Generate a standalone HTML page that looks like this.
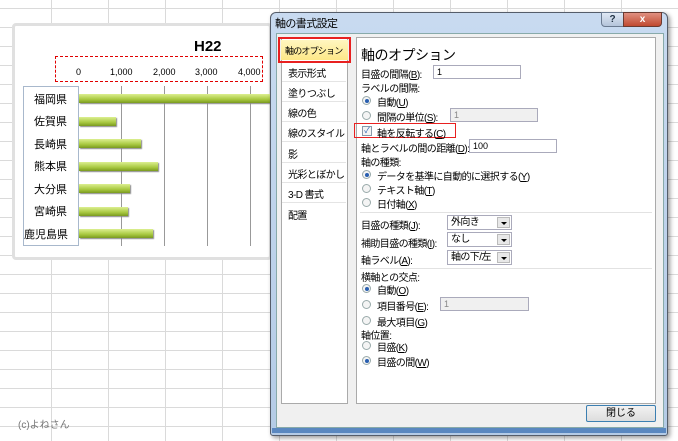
<!DOCTYPE html>
<html><head><meta charset="utf-8">
<style>
*{margin:0;padding:0;box-sizing:border-box}
body{width:678px;height:441px;overflow:hidden;position:relative;background:#fff;font-family:"Liberation Sans","Noto Sans CJK JP",sans-serif;font-size:10px;color:#000}
.a{position:absolute;white-space:nowrap}
.d{letter-spacing:-0.6px;font-size:10px}
.grid{position:absolute;left:0;top:0;width:678px;height:441px;
background-image:linear-gradient(#dadada 1px,transparent 1px),linear-gradient(90deg,#dadada 1px,transparent 1px);
background-size:57px 19px,57px 19px;background-position:0 8px,51px 0}
.rad{position:absolute;width:9px;height:9px;border-radius:50%;border:1px solid #9aa;background:#f4f4f4}
.rad.on::after{content:"";position:absolute;left:1.5px;top:1.5px;width:4px;height:4px;border-radius:50%;background:#2a5fb0}
.inp{position:absolute;height:14px;border:1px solid #aab;background:#fff;padding-left:3px;font-size:9px;line-height:12px}
.sel{position:absolute;height:15px;border:1px solid #aab;background:#fff;padding-left:3px;font-size:10px;line-height:13px;letter-spacing:-0.6px}
.sel b{position:absolute;right:1px;top:1px;width:13px;height:11px;background:#e8e8e8;border:1px solid #bbb}
.sel b::after{content:"";position:absolute;left:3px;top:4px;border:3px solid transparent;border-top:3px solid #000}
.li{position:absolute;left:288px;font-size:10px;letter-spacing:-0.6px;white-space:nowrap}
.sep{position:absolute;left:282px;width:64px;height:1px;background:#e4e4e4}
</style></head><body>
<div class="grid"></div>
<div class="a" style="left:12px;top:23px;width:260px;height:237px;background:#fff;border:3px solid #e0e0e0;border-radius:4px"></div>
<div class="a" style="left:194px;top:38px;font-size:15px;font-weight:bold">H22</div>
<div class="a" style="left:55px;top:56px;width:208px;height:26px;border:1px dashed #e00000"></div>
<div class="a" style="left:76px;top:67px;font-size:9px">0</div>
<div class="a" style="left:110px;top:67px;font-size:9px">1,000</div>
<div class="a" style="left:153px;top:67px;font-size:9px">2,000</div>
<div class="a" style="left:195px;top:67px;font-size:9px">3,000</div>
<div class="a" style="left:238px;top:67px;font-size:9px">4,000</div>
<div class="a" style="left:121px;top:86px;width:1px;height:160px;background:#999"></div>
<div class="a" style="left:164px;top:86px;width:1px;height:160px;background:#999"></div>
<div class="a" style="left:207px;top:86px;width:1px;height:160px;background:#999"></div>
<div class="a" style="left:250px;top:86px;width:1px;height:160px;background:#999"></div>
<div class="a" style="left:23px;top:86px;width:56px;height:160px;border:1px solid #a8b8cc"></div>
<div class="a" style="left:34px;top:91px;font-size:11px">福岡県</div>
<div class="a" style="left:34px;top:113px;font-size:11px">佐賀県</div>
<div class="a" style="left:34px;top:136px;font-size:11px">長崎県</div>
<div class="a" style="left:34px;top:158px;font-size:11px">熊本県</div>
<div class="a" style="left:34px;top:181px;font-size:11px">大分県</div>
<div class="a" style="left:34px;top:203px;font-size:11px">宮崎県</div>
<div class="a" style="left:24px;top:226px;font-size:11px">鹿児島県</div>
<div class="a" style="left:79px;top:94px;width:192px;height:9px;background:linear-gradient(#dcef90,#a8c840 60%,#7a9a20);box-shadow:1px 1px 1px #888"></div>
<div class="a" style="left:79px;top:117px;width:37px;height:9px;background:linear-gradient(#dcef90,#a8c840 60%,#7a9a20);box-shadow:1px 1px 1px #888"></div>
<div class="a" style="left:79px;top:139px;width:62px;height:9px;background:linear-gradient(#dcef90,#a8c840 60%,#7a9a20);box-shadow:1px 1px 1px #888"></div>
<div class="a" style="left:79px;top:162px;width:79px;height:9px;background:linear-gradient(#dcef90,#a8c840 60%,#7a9a20);box-shadow:1px 1px 1px #888"></div>
<div class="a" style="left:79px;top:184px;width:51px;height:9px;background:linear-gradient(#dcef90,#a8c840 60%,#7a9a20);box-shadow:1px 1px 1px #888"></div>
<div class="a" style="left:79px;top:207px;width:49px;height:9px;background:linear-gradient(#dcef90,#a8c840 60%,#7a9a20);box-shadow:1px 1px 1px #888"></div>
<div class="a" style="left:79px;top:229px;width:74px;height:9px;background:linear-gradient(#dcef90,#a8c840 60%,#7a9a20);box-shadow:1px 1px 1px #888"></div>
<div class="a" style="left:18px;top:416px;font-size:10px;color:#777">(c)よねさん</div>
<!-- dialog -->
<div class="a" style="left:270px;top:12px;width:398px;height:424px;background:linear-gradient(#c8daf0,#b4cbe6);border:1px solid #555d6a;border-radius:6px 6px 3px 3px;box-shadow:2px 2px 5px rgba(0,0,0,.4)"></div>
<div class="a" style="left:272px;top:428px;width:394px;height:5px;background:#5a88c0"></div>
<div class="a d" style="left:275px;top:15px;font-size:11px">軸の書式設定</div>
<div class="a" style="left:601px;top:12px;width:23px;height:15px;background:linear-gradient(#dfe8f4,#b4c4da);border:1px solid #6a7a90;border-radius:0 0 0 4px;text-align:center;font-weight:bold;font-size:10px;line-height:13px;color:#234">?</div>
<div class="a" style="left:623px;top:12px;width:39px;height:15px;background:linear-gradient(#e09080,#c04a30);border:1px solid #6a3a30;border-radius:0 0 4px 0;text-align:center;font-weight:bold;font-size:10px;line-height:13px;color:#fff">x</div>
<div class="a" style="left:276px;top:33px;width:388px;height:395px;background:#f0f0f0;border:1px solid #8aa"></div>
<div class="a" style="left:281px;top:37px;width:67px;height:367px;background:#fff;border:1px solid #aaa"></div>
<div class="a" style="left:356px;top:37px;width:300px;height:367px;background:#fff;border:1px solid #aaa"></div>
<div class="a" style="left:278px;top:37px;width:73px;height:26px;border:2px solid #e82020"></div>
<div class="a" style="left:281px;top:40px;width:67px;height:20px;background:linear-gradient(#fff6c0,#fde888)"></div>
<div class="li" style="left:285px;top:44px;font-size:9px;letter-spacing:-0.8px">軸のオプション</div>
<div class="li" style="top:65px">表示形式</div><div class="sep" style="top:81px"></div>
<div class="li" style="top:85px">塗りつぶし</div><div class="sep" style="top:101px"></div>
<div class="li" style="top:105px">線の色</div><div class="sep" style="top:121px"></div>
<div class="li" style="top:125px">線のスタイル</div><div class="sep" style="top:141px"></div>
<div class="li" style="top:146px">影</div><div class="sep" style="top:162px"></div>
<div class="li" style="top:166px">光彩とぼかし</div><div class="sep" style="top:182px"></div>
<div class="li" style="top:186px">3-D 書式</div><div class="sep" style="top:202px"></div>
<div class="li" style="top:207px">配置</div>
<div class="a" style="left:361px;top:45px;font-size:14px;letter-spacing:-0.5px">軸のオプション</div>
<div class="a d" style="left:361px;top:66px">目盛の間隔(<u>B</u>):</div>
<div class="inp" style="left:433px;top:65px;width:88px">1</div>
<div class="a d" style="left:361px;top:80px">ラベルの間隔:</div>
<div class="rad on" style="left:362px;top:96px"></div><div class="a d" style="left:377px;top:94px">自動(<u>U</u>)</div>
<div class="rad" style="left:362px;top:111px"></div><div class="a d" style="left:377px;top:109px">間隔の単位(<u>S</u>):</div>
<div class="inp" style="left:450px;top:108px;width:88px;background:#f0f0f0;color:#888">1</div>
<div class="a" style="left:354px;top:123px;width:102px;height:15px;border:1.5px solid #e82020"></div>
<div class="a" style="left:362px;top:126px;width:10px;height:10px;border:1px solid #8899aa;background:#f4f4f4;font-size:8px;line-height:8px;color:#2a5fb0;text-align:center">✓</div>
<div class="a d" style="left:377px;top:125px">軸を反転する(<u>C</u>)</div>
<div class="a d" style="left:361px;top:140px">軸とラベルの間の距離(<u>D</u>):</div>
<div class="inp" style="left:469px;top:139px;width:88px">100</div>
<div class="a d" style="left:361px;top:154px">軸の種類:</div>
<div class="rad on" style="left:362px;top:170px"></div><div class="a d" style="left:377px;top:168px">データを基準に自動的に選択する(<u>Y</u>)</div>
<div class="rad" style="left:362px;top:184px"></div><div class="a d" style="left:377px;top:182px">テキスト軸(<u>T</u>)</div>
<div class="rad" style="left:362px;top:198px"></div><div class="a d" style="left:377px;top:196px">日付軸(<u>X</u>)</div>
<div class="a" style="left:360px;top:212px;width:292px;height:1px;background:#e2e2e2"></div>
<div class="a d" style="left:361px;top:217px">目盛の種類(<u>J</u>):</div>
<div class="sel" style="left:447px;top:215px;width:65px">外向き<b></b></div>
<div class="a d" style="left:361px;top:235px">補助目盛の種類(<u>I</u>):</div>
<div class="sel" style="left:447px;top:232px;width:65px">なし<b></b></div>
<div class="a d" style="left:361px;top:252px">軸ラベル(<u>A</u>):</div>
<div class="sel" style="left:447px;top:250px;width:65px">軸の下/左<b></b></div>
<div class="a" style="left:360px;top:268px;width:292px;height:1px;background:#e2e2e2"></div>
<div class="a d" style="left:361px;top:269px">横軸との交点:</div>
<div class="rad on" style="left:362px;top:284px"></div><div class="a d" style="left:377px;top:282px">自動(<u>O</u>)</div>
<div class="rad" style="left:362px;top:300px"></div><div class="a d" style="left:377px;top:298px">項目番号(<u>E</u>):</div>
<div class="inp" style="left:440px;top:297px;width:89px;background:#f0f0f0;color:#888">1</div>
<div class="rad" style="left:362px;top:316px"></div><div class="a d" style="left:377px;top:314px">最大項目(<u>G</u>)</div>
<div class="a d" style="left:361px;top:327px">軸位置:</div>
<div class="rad" style="left:362px;top:341px"></div><div class="a d" style="left:377px;top:339px">目盛(<u>K</u>)</div>
<div class="rad on" style="left:362px;top:356px"></div><div class="a d" style="left:377px;top:354px">目盛の間(<u>W</u>)</div>
<div class="a" style="left:586px;top:405px;width:70px;height:17px;border:1px solid #3c7fb1;border-radius:2px;background:linear-gradient(#f2f2f2,#ddd);text-align:center;line-height:15px;font-size:10px">閉じる</div>
</body></html>
